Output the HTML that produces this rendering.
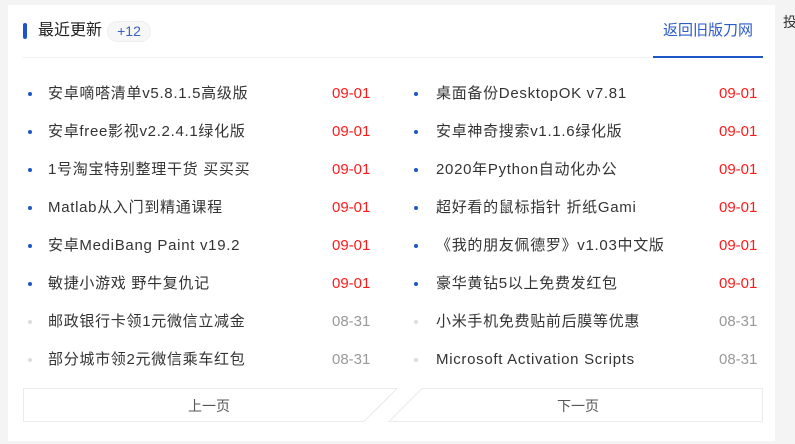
<!DOCTYPE html>
<html><head><meta charset="utf-8"><style>
*{margin:0;padding:0;box-sizing:border-box}
body{width:795px;height:444px;background:#f4f4f4;font-family:"Liberation Sans","Noto Sans CJK SC",sans-serif;position:relative;overflow:hidden}
.card{position:absolute;left:8px;top:5px;width:767px;height:436px;background:#fff}
.bar{position:absolute;left:23px;top:23px;width:4px;height:16px;background:#1e56c8;border-radius:2px}
.title{position:absolute;left:38px;top:21px;font-size:16px;color:#222;line-height:20px}
.badge{position:absolute;left:107px;top:21px;width:44px;height:21px;border:1px solid #eee;background:#f7f7f7;border-radius:11px;font-size:14px;color:#3a62c4;text-align:center;line-height:19px}
.ret{position:absolute;left:663px;top:22px;font-size:15px;color:#2a5bc9;line-height:18px}
.line{position:absolute;left:23px;top:57px;width:740px;height:1px;background:#f0f0f0}
.uline{position:absolute;left:653px;top:56px;width:110px;height:2px;background:#1e56c8}
.row{position:absolute;font-size:15px;letter-spacing:0.7px;color:#333;line-height:20px;white-space:nowrap}
.dot{position:absolute;width:4px;height:4px;border-radius:50%;background:#1e56c8}
.dot.g{background:#ddd}
.d{position:absolute;font-size:15px;line-height:20px;color:#ff1a1a}
.d.g{color:#999}
</style></head><body>
<div class="card"></div>
<div class="bar"></div>
<div class="title">最近更新</div>
<div class="badge">+12</div>
<div class="ret">返回旧版刀网</div>
<div class="line"></div>
<div class="uline"></div>
<div style="position:absolute;left:783px;top:13px;font-size:14px;color:#333;line-height:18px">投</div>

<div class="dot" style="left:28px;top:92px"></div><div class="row" style="left:48px;top:84px">安卓嘀嗒清单v5.8.1.5高级版</div><div class="d" style="left:332px;top:84px">09-01</div>
<div class="dot" style="left:28px;top:130px"></div><div class="row" style="left:48px;top:122px">安卓free影视v2.2.4.1绿化版</div><div class="d" style="left:332px;top:122px">09-01</div>
<div class="dot" style="left:28px;top:168px"></div><div class="row" style="left:48px;top:160px">1号淘宝特别整理干货 买买买</div><div class="d" style="left:332px;top:160px">09-01</div>
<div class="dot" style="left:28px;top:206px"></div><div class="row" style="left:48px;top:198px">Matlab从入门到精通课程</div><div class="d" style="left:332px;top:198px">09-01</div>
<div class="dot" style="left:28px;top:244px"></div><div class="row" style="left:48px;top:236px">安卓MediBang Paint v19.2</div><div class="d" style="left:332px;top:236px">09-01</div>
<div class="dot" style="left:28px;top:282px"></div><div class="row" style="left:48px;top:274px">敏捷小游戏 野牛复仇记</div><div class="d" style="left:332px;top:274px">09-01</div>
<div class="dot g" style="left:28px;top:320px"></div><div class="row" style="left:48px;top:312px">邮政银行卡领1元微信立减金</div><div class="d g" style="left:332px;top:312px">08-31</div>
<div class="dot g" style="left:28px;top:358px"></div><div class="row" style="left:48px;top:350px">部分城市领2元微信乘车红包</div><div class="d g" style="left:332px;top:350px">08-31</div>

<div class="dot" style="left:414px;top:92px"></div><div class="row" style="left:436px;top:84px">桌面备份DesktopOK v7.81</div><div class="d" style="left:719px;top:84px">09-01</div>
<div class="dot" style="left:414px;top:130px"></div><div class="row" style="left:436px;top:122px">安卓神奇搜索v1.1.6绿化版</div><div class="d" style="left:719px;top:122px">09-01</div>
<div class="dot" style="left:414px;top:168px"></div><div class="row" style="left:436px;top:160px">2020年Python自动化办公</div><div class="d" style="left:719px;top:160px">09-01</div>
<div class="dot" style="left:414px;top:206px"></div><div class="row" style="left:436px;top:198px">超好看的鼠标指针 折纸Gami</div><div class="d" style="left:719px;top:198px">09-01</div>
<div class="dot" style="left:414px;top:244px"></div><div class="row" style="left:436px;top:236px">《我的朋友佩德罗》v1.03中文版</div><div class="d" style="left:719px;top:236px">09-01</div>
<div class="dot" style="left:414px;top:282px"></div><div class="row" style="left:436px;top:274px">豪华黄钻5以上免费发红包</div><div class="d" style="left:719px;top:274px">09-01</div>
<div class="dot g" style="left:414px;top:320px"></div><div class="row" style="left:436px;top:312px">小米手机免费贴前后膜等优惠</div><div class="d g" style="left:719px;top:312px">08-31</div>
<div class="dot g" style="left:414px;top:358px"></div><div class="row" style="left:436px;top:350px">Microsoft Activation Scripts</div><div class="d g" style="left:719px;top:350px">08-31</div>

<svg style="position:absolute;left:0;top:0" width="795" height="444">
<path d="M23.5 388.5 H397 L364 421.5 H23.5 Z" fill="#fff" stroke="#ebebeb"/>
<path d="M422 388.5 H762.5 V421.5 H389 Z" fill="#fff" stroke="#ebebeb"/>
<text x="209" y="411" font-size="14" fill="#555" text-anchor="middle" font-family="Liberation Sans, Noto Sans CJK SC, sans-serif">上一页</text>
<text x="578" y="411" font-size="14" fill="#555" text-anchor="middle" font-family="Liberation Sans, Noto Sans CJK SC, sans-serif">下一页</text>
</svg>
</body></html>
